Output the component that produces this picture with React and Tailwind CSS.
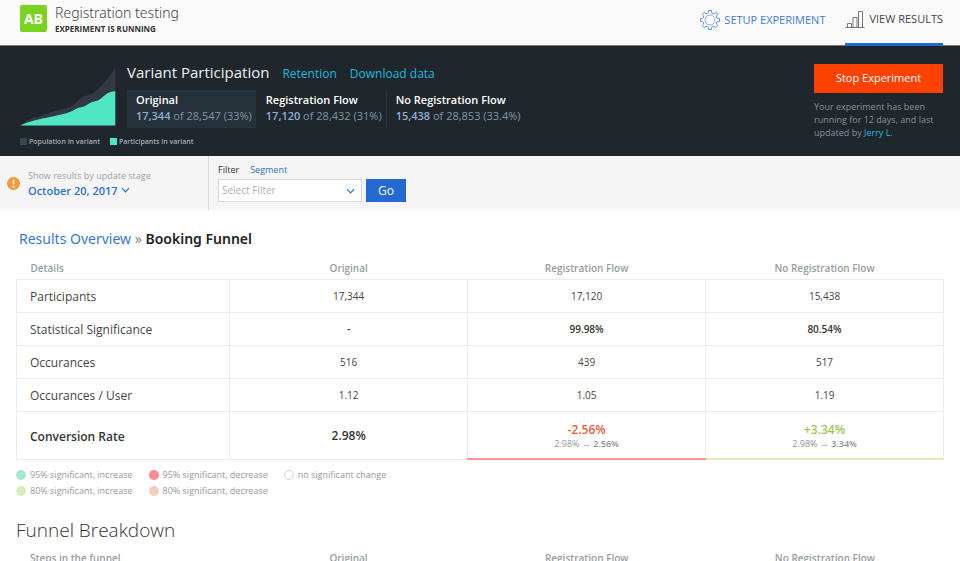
import React, { useState } from 'react';

const variants = [
  { name: 'Original', count: '17,344', total: '28,547 (33%)' },
  { name: 'Registration Flow', count: '17,120', total: '28,432 (31%)' },
  { name: 'No Registration Flow', count: '15,438', total: '28,853 (33.4%)' },
];

const rows = [
  { label: 'Participants', values: ['17,344', '17,120', '15,438'] },
  { label: 'Statistical Significance', values: ['-', '99.98%', '80.54%'], strong: true },
  { label: 'Occurances', values: ['516', '439', '517'] },
  { label: 'Occurances / User', values: ['1.12', '1.05', '1.19'] },
];

const legend = [
  [
    { label: '95% significant, increase', dot: 'bg-[#a3e8d2]' },
    { label: '80% significant, increase', dot: 'bg-[#d9eebb]' },
  ],
  [
    { label: '95% significant, decrease', dot: 'bg-[#ff8a90]' },
    { label: '80% significant, decrease', dot: 'bg-[#f6cabd]' },
  ],
  [{ label: 'no significant change', dot: 'bg-white border border-[#d4d4d4]' }],
];

const point = (radius, degrees) => {
  const a = (degrees * Math.PI) / 180;
  return `${(12 + radius * Math.cos(a)).toFixed(2)} ${(12 + radius * Math.sin(a)).toFixed(2)}`;
};

// eight rounded teeth, 45 degrees apart
const gearPath = () => {
  let d = '';
  for (let i = 0; i < 8; i++) {
    const a = i * 45;
    d += `${i === 0 ? 'M' : 'L'}${point(9.2, a - 12)} L${point(11.4, a - 10)} A11.4 11.4 0 0 1 ${point(11.4, a + 10)} `;
    d += `L${point(9.2, a + 12)} Q${point(7.9, a + 22.5)} ${point(9.2, a + 33)} `;
  }
  return d + 'Z';
};

const GearIcon = () => (
  <svg viewBox="0 0 24 24" className="w-5 h-5" fill="none" stroke="#4f86d9" strokeWidth="1.1" aria-hidden="true">
    <path d={gearPath()} strokeLinejoin="round" />
    <circle cx="12" cy="12" r="6" strokeWidth="0.8" />
  </svg>
);

const BarsIcon = () => (
  <svg viewBox="0 0 20 18" className="w-5 h-[18px]" fill="none" stroke="#6a6a6a" strokeWidth="0.9" aria-hidden="true">
    <path d="M0.5 16.5H19.5M2.5 16.5V12.5H6.5V16.5M8 16.5V6.5H12V16.5M13.5 16.5V0.5H17.5V16.5" />
  </svg>
);

const ChevronIcon = ({ className }) => (
  <svg viewBox="0 0 10 6" className={className} fill="none" stroke="#2f72cf" strokeWidth="1.3" aria-hidden="true">
    <path d="M1 1L5 5L9 1" />
  </svg>
);

const ParticipationChart = () => (
  <svg viewBox="0 0 96 58" className="w-24 h-[58px]" aria-hidden="true">
    <path
      d="M0 57.5C5 54 9 50.5 14 49.5C20 49 23 46.5 30 44.5C37 42 44 41.5 49 39.5C55 37 56 33 63 29C68 27 72 26.5 77 22C86 14.5 88 9 95.3 0V57.5Z"
      fill="#313a42"
    />
    <path
      d="M0 57.5C10 53 20 51 30 49C38 47 45 46 51 43.5C55 42 56 40 60 39.5C65 39 67 36.5 71 34.5C75 33 77 33.5 81 30.5C85 27.5 88 23.5 95.3 23.3V57.5Z"
      fill="#50e6c4"
    />
  </svg>
);

const Header = () => (
  <header className="flex h-[46px] items-stretch justify-between border-b border-[#777b7e] bg-[#fbfbfb] pl-5 pr-[17px]">
    <div className="flex items-start gap-2 pt-1">
      <div className="mt-px flex h-[27px] w-[27px] items-center justify-center rounded-[2px] bg-[#7bd321] text-sm font-bold text-white">
        AB
      </div>
      <div>
        <h1 className="font-['Noto_Sans',sans-serif] text-[14px] leading-[17px] font-light text-[#444]">Registration testing</h1>
        <p className="text-[8px] leading-[15px] font-bold text-[#333]">EXPERIMENT IS RUNNING</p>
      </div>
    </div>
    <nav className="-mb-px flex gap-5 text-[11px]">
      <a href="#setup" className="flex items-center gap-1 pb-1.5 text-[#3f7ad6]">
        <GearIcon />
        SETUP EXPERIMENT
      </a>
      <a href="#results" className="flex items-center gap-1 border-b-3 border-[#2469d1] pb-1 text-[#444]">
        <BarsIcon />
        VIEW RESULTS
      </a>
    </nav>
  </header>
);

const Participation = () => (
  <section className="flex h-[110px] items-start justify-between bg-[#1f262c] pl-5 pr-[17px] pt-[18px]">
    <div className="flex gap-[11px]">
      <div className="relative pt-1">
        <ParticipationChart />
        <div className="absolute left-0 top-[73px] flex gap-[10px] whitespace-nowrap text-[7px] leading-[9px] font-semibold text-[#a4adb4]">
          <span className="flex items-center gap-[2px]">
            <i className="h-[7px] w-[7px] bg-[#3a444b]" />
            Population in variant
          </span>
          <span className="flex items-center gap-[2px]">
            <i className="h-[7px] w-[7px] bg-[#50e6c4]" />
            Participants in variant
          </span>
        </div>
      </div>
      <div>
        <div className="flex items-baseline">
          <h2 className="text-[15px] leading-4 text-[#eef0f1]">Variant Participation</h2>
          <a href="#retention" className="ml-[13px] text-[12px] leading-4 text-[#22b8dc]">Retention</a>
          <a href="#download" className="ml-[13px] text-[12px] leading-4 text-[#22b8dc]">Download data</a>
        </div>
        <div className="mt-2 flex">
          {variants.map((v, i) => (
            <div
              key={v.name}
              className={`h-[38px] pt-0.5 text-[11px] leading-4 whitespace-nowrap ${
                i === 0 ? 'bg-[#263239] pl-[9px] pr-1' : i === 1 ? 'border-r border-[#29323a] pl-[10px] pr-1' : 'pl-[9px]'
              }`}
            >
              <div className="font-semibold text-white">{v.name}</div>
              <div className="text-[#8095a8]">
                <span className="font-semibold text-[#8fafd2]">{v.count}</span> of {v.total}
              </div>
            </div>
          ))}
        </div>
      </div>
    </div>
    <div className="w-[129px]">
      <button type="button" className="h-[29px] w-full bg-[#fb4203] text-[11px] text-white">
        Stop Experiment
      </button>
      <p className="mt-[7px] text-[9px] leading-[13px] whitespace-nowrap text-[#87919a]">
        Your experiment has been
        <br />
        running for 12 days, and last
        <br />
        updated by <a href="#jerry" className="text-[#22b8dc]">Jerry L.</a>
      </p>
    </div>
  </section>
);

const FilterBar = () => {
  const [filter, setFilter] = useState('');

  return (
    <section className="flex h-[54px] bg-[#f5f5f5]">
      <div className="flex w-[209px] items-center gap-2 border-r border-[#d9d9d9] pl-[7px]">
        <svg viewBox="0 0 13 13" className="h-[13px] w-[13px]" aria-hidden="true">
          <circle cx="6.5" cy="6.5" r="6.5" fill="#f39a3b" />
          <rect x="5.7" y="2.6" width="1.6" height="5" rx="0.5" fill="#fff" />
          <circle cx="6.5" cy="9.7" r="1" fill="#fff" />
        </svg>
        <div>
          <p className="text-[9px] leading-[14px] text-[#a3a3a3]">Show results by update stage</p>
          <button type="button" className="flex items-center gap-[3px] text-[11px] leading-[15px] font-semibold text-[#2f72cf]">
            October 20, 2017
            <ChevronIcon className="h-[6px] w-[9px]" />
          </button>
        </div>
      </div>
      <div className="pl-[9px] pt-2">
        <div className="flex gap-[11px] text-[9px] leading-[12px]">
          <label htmlFor="filter" className="text-[#333]">Filter</label>
          <a href="#segment" className="text-[#2f72cf]">Segment</a>
        </div>
        <div className="mt-[3px] flex gap-1">
          <div className="relative">
            <select
              id="filter"
              value={filter}
              onChange={(e) => setFilter(e.target.value)}
              className="block h-[23px] w-36 appearance-none border border-[#d8d8d8] bg-white pl-[3px] text-[10px] text-[#b0b0b0]"
            >
              <option value="">Select Filter</option>
            </select>
            <ChevronIcon className="pointer-events-none absolute right-[7px] top-[9px] h-[6px] w-[9px]" />
          </div>
          <button type="button" className="h-[23px] w-10 bg-[#2469d1] text-[12px] text-white">Go</button>
        </div>
      </div>
    </section>
  );
};

const HeadRow = ({ first }) => (
  <thead>
    <tr className="h-[22px] text-[10px] leading-[14px] text-[#969da2]">
      <th className="w-[23%] pl-[14px] text-left font-semibold">{first}</th>
      {variants.map((v) => (
        <th key={v.name} className="font-semibold">{v.name}</th>
      ))}
    </tr>
  </thead>
);

const cell = 'border border-[#ececec] pt-0.5 text-center';

const Change = ({ value, color, to }) => (
  <>
    <div className={`text-[12px] leading-[16px] font-semibold ${color}`}>{value}</div>
    <div className="text-[9px] leading-[12px] text-[#8d9499]">
      2.98% → <b className="font-semibold">{to}</b>
    </div>
  </>
);

const App = () => {
  return (
    <div className="min-h-screen bg-white font-['Open_Sans',sans-serif]">
      <Header />
      <Participation />
      <FilterBar />
      <main className="px-4">
        <h2 className="pl-[3px] pt-5 font-['Noto_Sans',sans-serif] text-[14px] leading-[18px]">
          <a href="#overview" className="text-[#3a76d2]">Results Overview</a>
          <span className="text-[#888]"> » </span>
          <span className="font-semibold text-[#222]">Booking Funnel</span>
        </h2>
        <table className="mt-[9px] w-full table-fixed border-collapse">
          <HeadRow first="Details" />
          <tbody>
            {rows.map((row) => (
              <tr key={row.label} className="h-[33px] text-[10px] text-[#444]">
                <th scope="row" className="border border-[#ececec] pl-[13px] pt-0.5 text-left text-[12px] font-normal">
                  {row.label}
                </th>
                {row.values.map((value, i) => (
                  <td key={i} className={row.strong ? `${cell} font-semibold text-[#333]` : cell}>{value}</td>
                ))}
              </tr>
            ))}
            <tr className="h-12 text-[12px] font-semibold text-[#333]">
              <th scope="row" className="border border-[#ececec] pl-[13px] pt-1 text-left font-semibold">Conversion Rate</th>
              <td className={cell}>2.98%</td>
              <td className="border border-b-2 border-[#ececec] border-b-[#fb9095] pt-0.5 text-center font-normal">
                <Change value="-2.56%" color="text-[#ee5a36]" to="2.56%" />
              </td>
              <td className="border border-b-2 border-[#ececec] border-b-[#dcebb9] pt-0.5 text-center font-normal">
                <Change value="+3.34%" color="text-[#9fc65a]" to="3.34%" />
              </td>
            </tr>
          </tbody>
        </table>
        <div className="mt-[7px] flex gap-4 text-[9px] leading-4 text-[#999]">
          {legend.map((group, i) => (
            <ul key={i}>
              {group.map((item) => (
                <li key={item.label} className="flex items-center gap-1">
                  <i className={`h-[10px] w-[10px] rounded-full ${item.dot}`} />
                  {item.label}
                </li>
              ))}
            </ul>
          ))}
        </div>
        <h2 className="mt-[19px] text-[19px] leading-[24px] font-light text-[#333]">Funnel Breakdown</h2>
        <table className="mt-[5px] w-full table-fixed border-collapse">
          <HeadRow first="Steps in the funnel" />
        </table>
      </main>
    </div>
  );
};

export default App;
